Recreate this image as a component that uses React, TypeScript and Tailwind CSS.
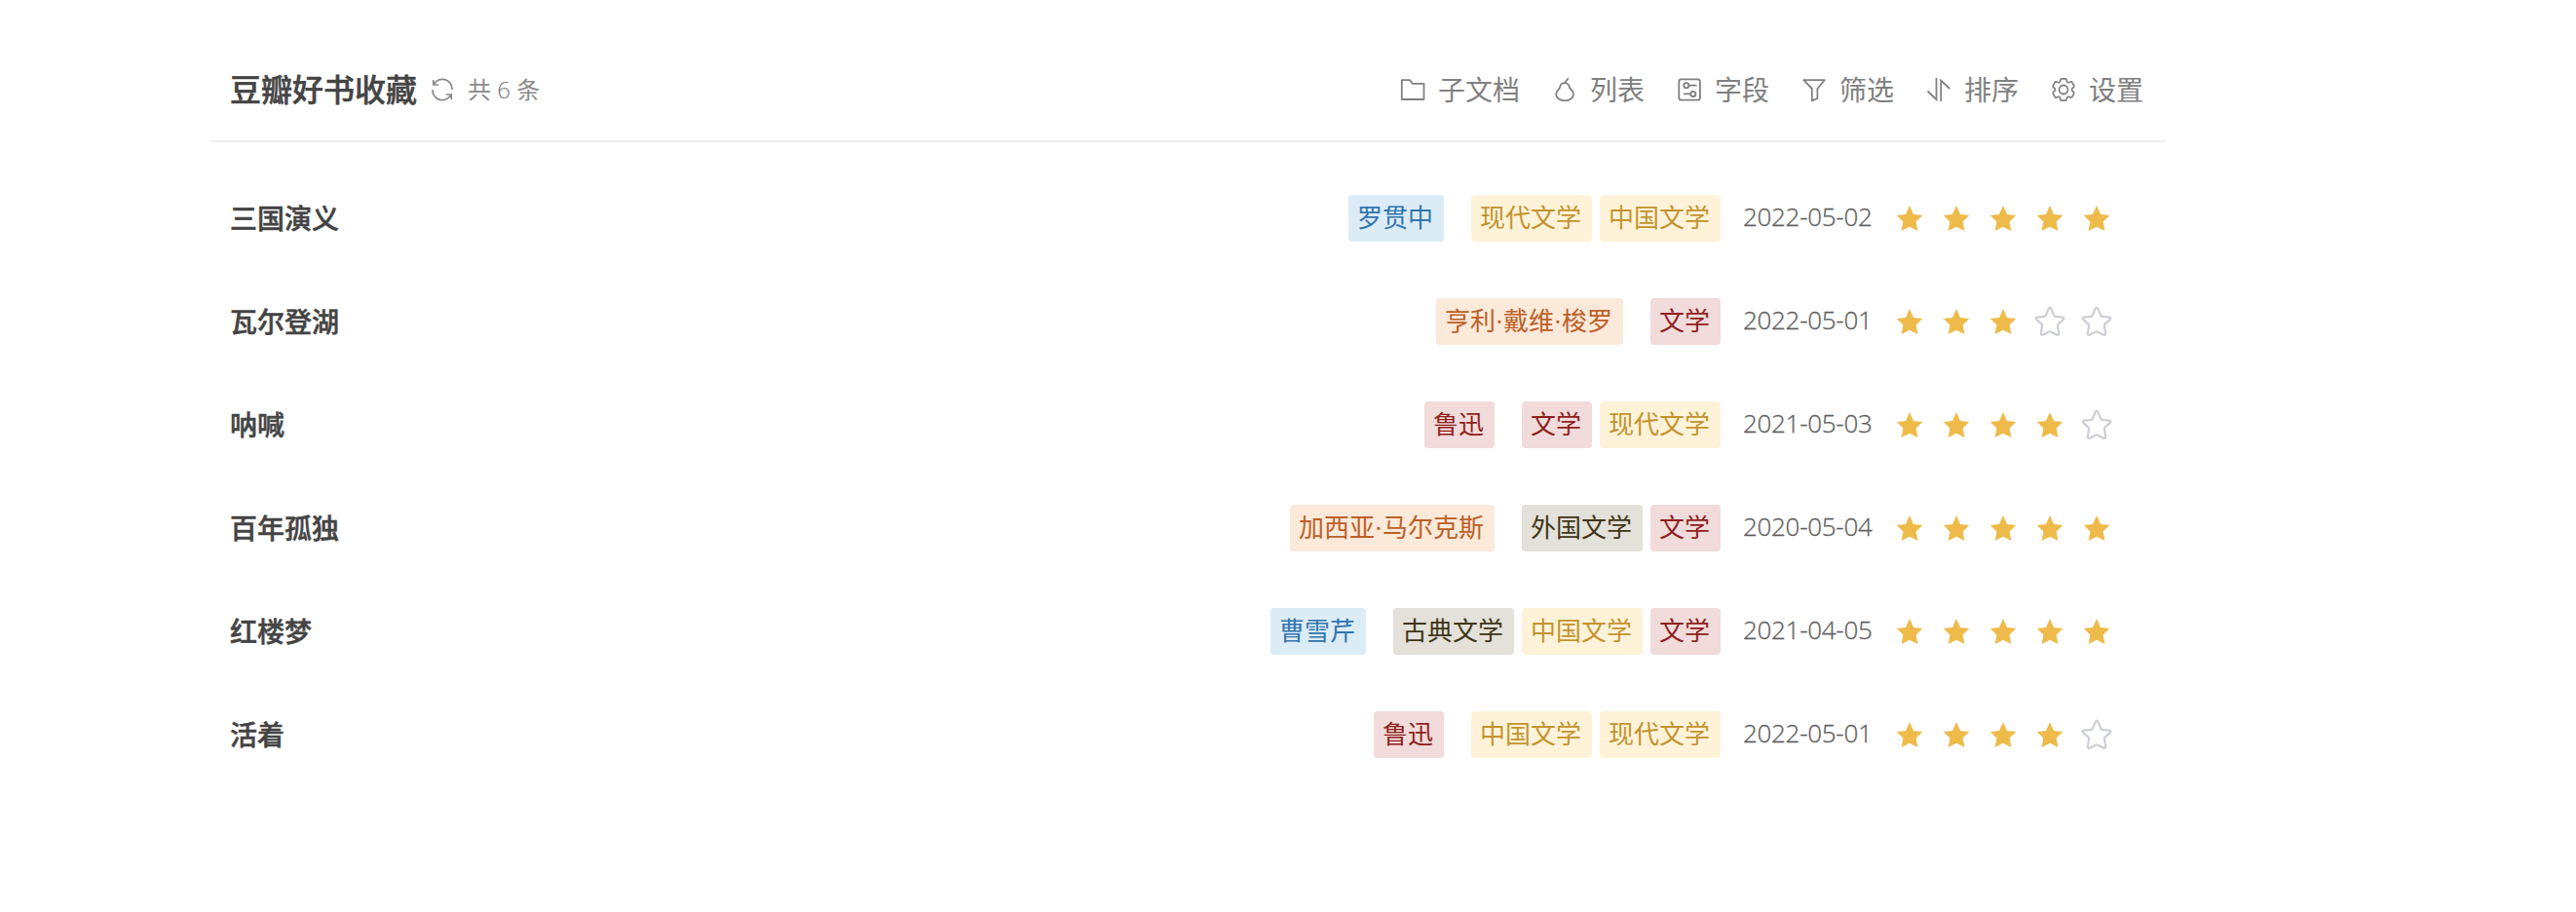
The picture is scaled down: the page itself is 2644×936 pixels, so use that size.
import type { ReactNode } from "react";

type Tone = "blue" | "yellow" | "orange" | "red" | "olive";
type Tag = { text: string; tone: Tone };
type Book = { title: string; author: Tag; tags: Tag[]; date: string; rating: number };

const tones: Record<Tone, string> = {
  blue: "bg-[#dbecf7] text-[#3275ae]",
  yellow: "bg-[#fef3d8] text-[#c4932f]",
  orange: "bg-[#fbe9da] text-[#bd5f26]",
  red: "bg-[#f1dbdb] text-[#8f1f1c]",
  olive: "bg-[#e3e1d9] text-[#3f3517]",
};

const modern: Tag = { text: "现代文学", tone: "yellow" };
const chinese: Tag = { text: "中国文学", tone: "yellow" };
const literature: Tag = { text: "文学", tone: "red" };
const luxun: Tag = { text: "鲁迅", tone: "red" };

const books: Book[] = [
  { title: "三国演义", author: { text: "罗贯中", tone: "blue" }, tags: [modern, chinese], date: "2022-05-02", rating: 5 },
  { title: "瓦尔登湖", author: { text: "亨利·戴维·梭罗", tone: "orange" }, tags: [literature], date: "2022-05-01", rating: 3 },
  { title: "呐喊", author: luxun, tags: [literature, modern], date: "2021-05-03", rating: 4 },
  { title: "百年孤独", author: { text: "加西亚·马尔克斯", tone: "orange" }, tags: [{ text: "外国文学", tone: "olive" }, literature], date: "2020-05-04", rating: 5 },
  { title: "红楼梦", author: { text: "曹雪芹", tone: "blue" }, tags: [{ text: "古典文学", tone: "olive" }, chinese, literature], date: "2021-04-05", rating: 5 },
  { title: "活着", author: luxun, tags: [chinese, modern], date: "2022-05-01", rating: 4 },
];

function Icon({ children }: { children: ReactNode }) {
  return (
    <svg className="size-7 shrink-0" viewBox="0 0 28 28" fill="none" stroke="currentColor" strokeWidth="1.8" strokeLinejoin="round">
      {children}
    </svg>
  );
}

const tools: { label: string; icon: ReactNode }[] = [
  { label: "子文档", icon: <path d="M2.800 4.200h8l3.200 3.600h11.500v16.200H2.800z" /> },
  {
    label: "列表",
    icon: (
      <path
        strokeLinecap="round"
        d="M13.800 7.200C11 7.200 9.600 8.800 9.200 11.200 8.800 13.800 5.200 14.800 5.200 18.600c0 4 4 6.800 8.900 6.800s8.900-2.800 8.900-6.800c0-3.800-3.600-4.800-4.200-7.400C18.300 8.800 16.600 7.200 13.800 7.200zM13.800 7.200l3.500-4.400"
      />
    ),
  },
  {
    label: "字段",
    icon: (
      <>
        <rect x="3.300" y="3.300" width="21.600" height="21.400" rx="2.500" />
        <circle cx="10.800" cy="9.700" r="2.600" />
        <circle cx="17.800" cy="18.400" r="2.600" />
        <path d="M13.500 9.700H21.500M15 18.400H8" />
      </>
    ),
  },
  { label: "筛选", icon: <path d="M3.300 4.200h21.400L17.400 13v10l-5.600 2.400V13z" /> },
  { label: "排序", icon: <path d="M2.500 15.500l9 8.700V2M16.200 26V4.500l9 8.500" strokeLinejoin="miter" /> },
  {
    label: "设置",
    icon: (
      <>
        <path
          transform="translate(0.700 0.700) scale(0.950)"
          d="M11.800 2.200H16.200Q17 2.200 17.200 3.400Q17.600 7.800 21.600 5.600Q22.600 5 23.200 6L25.300 9.800Q25.800 10.800 24.900 11.400Q21 14 24.900 16.600Q25.800 17.200 25.300 18.200L23.200 22Q22.600 23 21.600 22.400Q17.600 20.200 17.200 24.600Q17 25.800 16.200 25.800H11.800Q11 25.800 10.800 24.600Q10.400 20.200 6.400 22.400Q5.400 23 4.800 22L2.700 18.200Q2.200 17.200 3.100 16.600Q7 14 3.100 11.400Q2.200 10.800 2.700 9.800L4.800 6Q5.400 5 6.400 5.600Q10.400 7.800 10.800 3.400Q11 2.200 11.800 2.200z"
        />
        <circle cx="14" cy="14" r="4.500" />
      </>
    ),
  },
];

function TagPill({ tag }: { tag: Tag }) {
  return (
    <span className={`flex h-12 items-center rounded pr-[11px] pb-[3px] pl-[9px] text-[26px] leading-none ${tones[tag.tone]}`}>
      {tag.text.split("·").map((part, i) => (
        <span key={i} className="flex">
          {i > 0 && <span className="w-2 text-center">·</span>}
          {part}
        </span>
      ))}
    </span>
  );
}

function Star({ filled }: { filled: boolean }) {
  return (
    <svg className="size-12" viewBox="0 0 48 48">
      {filled ? (
        <path fill="#eebb4b" d="M24 11l4 9 9.300.9-6.700 6.700 1.800 9.400-8.400-4.200-8.400 4.200 1.800-9.400-6.700-6.700 9.300-.9z" />
      ) : (
        <path
          fill="none"
          stroke="#cdcfd6"
          strokeWidth="2.200"
          strokeLinejoin="round"
          d="M22.800 10.600c.6-1.200 1.800-1.200 2.400 0l3.300 7.600c.2.500.6.700 1 .7l7.600.7c1.300.2 1.600 1.400.7 2.300l-5.500 5c-.4.400-.5.800-.4 1.200l1.300 8.200c.2 1.200-.8 1.900-1.900 1.400l-6.500-3.200c-.5-.3-1.100-.3-1.600 0l-6.500 3.200c-1.100.5-2.100-.2-1.900-1.400l1.300-8.200c.1-.4 0-.8-.4-1.200l-5.500-5c-.9-.9-.6-2.100.7-2.300l7.600-.7c.4 0 .8-.2 1-.7z"
        />
      )}
    </svg>
  );
}

export default function App() {
  return (
    <div className="min-h-[936px] w-full bg-white pt-10 pl-[216px] font-['Open_Sans','Noto_Sans_CJK_SC',sans-serif]">
      <main className="w-[2006px]">
        <header className="flex h-[106px] items-center justify-between border-b-2 border-[#eeeeee] pr-[22px] pl-5">
          <div className="flex items-center">
            <h1 className="text-[32px] leading-none font-medium text-[#444444] [-webkit-text-stroke:0.5px_#444444]">豆瓣好书收藏</h1>
            <svg className="ml-3 size-7 text-[#8a8a8a]" viewBox="0 0 28 28" fill="none" stroke="currentColor" strokeWidth="1.700">
              <path d="M5 9A10 10 0 0 1 24 14M23 19A10 10 0 0 1 4 14M4.700 4v5h5.500M23.300 24v-5h-5.500" />
            </svg>
            <span className="ml-3 text-2xl leading-none text-[#8c8c8c]">
              共<span className="font-light text-[#777777]"> 6 </span>条
            </span>
          </div>
          <nav className="flex items-center gap-8 text-[28px] leading-none text-[#808080]">
            {tools.map((tool) => (
              <button key={tool.label} className="flex items-center gap-3">
                <Icon>{tool.icon}</Icon>
                <span>{tool.label}</span>
              </button>
            ))}
          </nav>
        </header>
        <ul className="pt-[25px]">
          {books.map((book) => (
            <li key={book.title} className="flex h-[106px] items-center pr-[46px] pl-5">
              <h2 className="flex-1 text-[28px] leading-none font-medium text-[#444444] [-webkit-text-stroke:0.5px_#444444]">{book.title}</h2>
              <TagPill tag={book.author} />
              <div className="ml-7 flex gap-2">
                {book.tags.map((tag) => (
                  <TagPill key={tag.text} tag={tag} />
                ))}
              </div>
              <time className="ml-[23px] w-[147px] pb-[4px] text-[26px] leading-none font-light tracking-[-0.300px] text-[#606060] [-webkit-text-stroke:0.3px_#606060]">
                {book.date}
              </time>
              <div className="flex">
                {[1, 2, 3, 4, 5].map((n) => (
                  <Star key={n} filled={n <= book.rating} />
                ))}
              </div>
            </li>
          ))}
        </ul>
      </main>
    </div>
  );
}
